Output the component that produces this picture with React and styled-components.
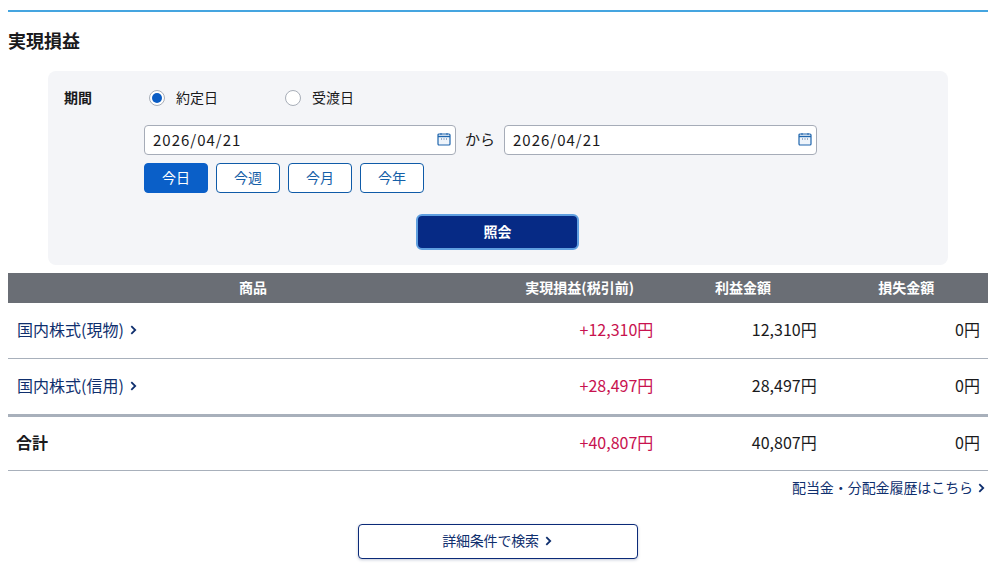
import React from "react";
import styled, { createGlobalStyle } from "styled-components";

const FONT = '"Noto Sans CJK JP", "Noto Sans", sans-serif';

const Global = createGlobalStyle`
  html, body { margin: 0; padding: 0; background: #fff; }
  body { font-family: ${FONT}; color: #1a1a1c; font-size: 14px; }
  * { box-sizing: border-box; }
`;

const Page = styled.div`
  width: 997px;
  height: 573px;
  overflow: hidden;
  padding: 10px 9px 0 8px;
`;
const Section = styled.section`
  border-top: 2px solid #45a5e0;
`;
const Title = styled.h2`
  margin: 0;
  height: 59px;
  padding-top: 16px;
  font-size: 18px;
  line-height: 24px;
  font-weight: 700;
`;
const Panel = styled.div`
  margin: 0 40px;
  height: 194px;
  padding: 15px 16px 0;
  background: #f4f5f8;
  border-radius: 8px;
  display: grid;
  grid-template-columns: 80px 1fr;
  align-content: start;
`;
const Label = styled.div`
  font-size: 14px;
  line-height: 22px;
  font-weight: 700;
`;
const Fields = styled.div`
  display: flex;
  flex-direction: column;
  align-items: flex-start;
`;
const RadioRow = styled.div`
  display: flex;
  height: 24px;
  margin-bottom: 15px;
  padding-left: 5px;
`;
const RadioItem = styled.label`
  display: flex;
  align-items: center;
  width: 136px;
  font-size: 14px;
  line-height: 20px;
`;
const RadioText = styled.span`
  margin-top: -3px;
`;
const RadioMark = styled.span`
  width: 16px;
  height: 16px;
  margin-right: 11px;
  border-radius: 50%;
  background: #fff;
  border: 1px solid #a8aeb8;
  display: flex;
  align-items: center;
  justify-content: center;
  &::after {
    content: "";
    display: ${(p) => (p.$on ? "block" : "none")};
    width: 10px;
    height: 10px;
    border-radius: 50%;
    background: #0a5cc4;
  }
`;
const DateRow = styled.div`
  display: flex;
  align-items: center;
`;
const DateBox = styled.div`
  height: 30px;
  border: 1px solid #a6acb8;
  border-radius: 4px;
  background: #fff;
  display: flex;
  align-items: center;
  justify-content: space-between;
  padding: 0 4px 2px 8px;
  font-size: 15px;
  letter-spacing: 1px;
  width: ${(p) => p.$w}px;
`;
const From = styled.span`
  width: 48px;
  text-align: center;
  font-size: 15px;
  line-height: 20px;
  padding-bottom: 3px;
`;
const QuickRow = styled.div`
  display: flex;
  gap: 8px;
  margin-top: 8px;
`;
const Quick = styled.button`
  width: 64px;
  height: 30px;
  padding: 0 0 3px;
  font-family: ${FONT};
  font-size: 14px;
  border-radius: 4px;
  border: 1px solid #0f5ba8;
  background: ${(p) => (p.$on ? "#0a5fc8" : "#fff")};
  border-color: ${(p) => (p.$on ? "#0a5fc8" : "#0f5ba8")};
  color: ${(p) => (p.$on ? "#fff" : "#1560a8")};
`;
const SubmitWrap = styled.div`
  grid-column: 1 / -1;
  display: flex;
  justify-content: center;
  margin-top: 21px;
  padding-right: 1px;
`;
const Submit = styled.button`
  width: 163px;
  height: 36px;
  padding: 0 0 2px;
  border: 2px solid #5f9fe0;
  border-radius: 6px;
  background: #062a85;
  color: #fff;
  font-family: ${FONT};
  font-size: 14px;
  font-weight: 700;
`;
const Grid = styled.div`
  display: grid;
  grid-template-columns: 3fr 1fr 1fr 1fr;
  align-items: center;
`;
const Head = styled(Grid)`
  margin-top: 8px;
  height: 30px;
  padding-bottom: 3px;
  background: #6a6e75;
  color: #fff;
  font-size: 14px;
  font-weight: 700;
  text-align: center;
`;
const Row = styled(Grid)`
  height: ${(p) => p.$h}px;
  padding-bottom: 4px;
  border-bottom: ${(p) => p.$b}px solid #a8b0bb;
`;
const NameCell = styled.div`
  padding-left: 9px;
`;
const ProductLink = styled.a`
  display: inline-flex;
  align-items: center;
  gap: 6px;
  color: #0f2f6e;
  font-size: 16px;
  svg { margin-top: 3px; }
`;
const TotalName = styled.div`
  padding-left: 8px;
  font-size: 16px;
  font-weight: 700;
`;
const Num = styled.div`
  text-align: right;
  padding-right: 8px;
  font-size: 16px;
  color: ${(p) => (p.$gain ? "#c8124f" : "#1a1a1c")};
`;
const LinkRow = styled.div`
  display: flex;
  justify-content: flex-end;
  height: 53px;
  padding-top: 6px;
`;
const SmallLink = styled.a`
  display: inline-flex;
  align-items: center;
  gap: 5px;
  height: 20px;
  padding-right: 3px;
  font-size: 14px;
  letter-spacing: -0.08px;
  color: #0f2f6e;
  svg { margin-top: 2px; }
`;
const BottomRow = styled.div`
  display: flex;
  justify-content: center;
`;
const DetailButton = styled.button`
  width: 280px;
  height: 35px;
  display: flex;
  align-items: center;
  justify-content: center;
  gap: 6px;
  padding: 0 2px 3px 0;
  background: #fff;
  border: 1px solid #0b2a78;
  border-radius: 4px;
  box-shadow: 0 1px 3px rgba(20, 40, 90, 0.25);
  font-family: ${FONT};
  font-size: 14px;
  letter-spacing: -0.2px;
  color: #0f2f6e;
  svg { margin-top: 2px; }
`;

const Chevron = () => (
  <svg width="7" height="10" viewBox="0 0 7 10" fill="none">
    <path d="M1.3 1.2 L5.2 5 L1.3 8.8" stroke="#0f2f6e" strokeWidth="1.8" />
  </svg>
);
const Calendar = () => (
  <svg width="14" height="14" viewBox="0 0 14 14" fill="none">
    <rect x="1" y="2" width="12" height="11" rx="1" fill="#eef4fb" stroke="#1f65ad" strokeWidth="1.2" />
    <path d="M1 4.5 H13" stroke="#1f65ad" strokeWidth="1.4" />
    <path d="M4 1 V3 M10 1 V3" stroke="#1f65ad" strokeWidth="1" />
    <path d="M4 7 H5 M6.5 7 H7.5 M9 7 H10" stroke="#4a6c98" strokeWidth="1" />
  </svg>
);

const rows = [
  ["国内株式(現物)", "+12,310円", "12,310円", 56, 1],
  ["国内株式(信用)", "+28,497円", "28,497円", 58, 3],
];

export default function App() {
  return (
    <Page>
      <Global />
      <Section>
        <Title>実現損益</Title>
        <Panel>
          <Label>期間</Label>
          <Fields>
            <RadioRow>
              <RadioItem><RadioMark $on /><RadioText>約定日</RadioText></RadioItem>
              <RadioItem><RadioMark /><RadioText>受渡日</RadioText></RadioItem>
            </RadioRow>
            <DateRow>
              <DateBox $w={312}>2026/04/21<Calendar /></DateBox>
              <From>から</From>
              <DateBox $w={313}>2026/04/21<Calendar /></DateBox>
            </DateRow>
            <QuickRow>
              <Quick $on>今日</Quick>
              <Quick>今週</Quick>
              <Quick>今月</Quick>
              <Quick>今年</Quick>
            </QuickRow>
          </Fields>
          <SubmitWrap>
            <Submit>照会</Submit>
          </SubmitWrap>
        </Panel>
        <Head>
          <div>商品</div>
          <div>実現損益(税引前)</div>
          <div>利益金額</div>
          <div>損失金額</div>
        </Head>
        {rows.map(([name, gain, profit, h, b]) => (
          <Row key={name} $h={h} $b={b}>
            <NameCell>
              <ProductLink>{name}<Chevron /></ProductLink>
            </NameCell>
            <Num $gain>{gain}</Num>
            <Num>{profit}</Num>
            <Num>0円</Num>
          </Row>
        ))}
        <Row $h={54} $b={1}>
          <TotalName>合計</TotalName>
          <Num $gain>+40,807円</Num>
          <Num>40,807円</Num>
          <Num>0円</Num>
        </Row>
        <LinkRow>
          <SmallLink>配当金・分配金履歴はこちら<Chevron /></SmallLink>
        </LinkRow>
        <BottomRow>
          <DetailButton>詳細条件で検索<Chevron /></DetailButton>
        </BottomRow>
      </Section>
    </Page>
  );
}
